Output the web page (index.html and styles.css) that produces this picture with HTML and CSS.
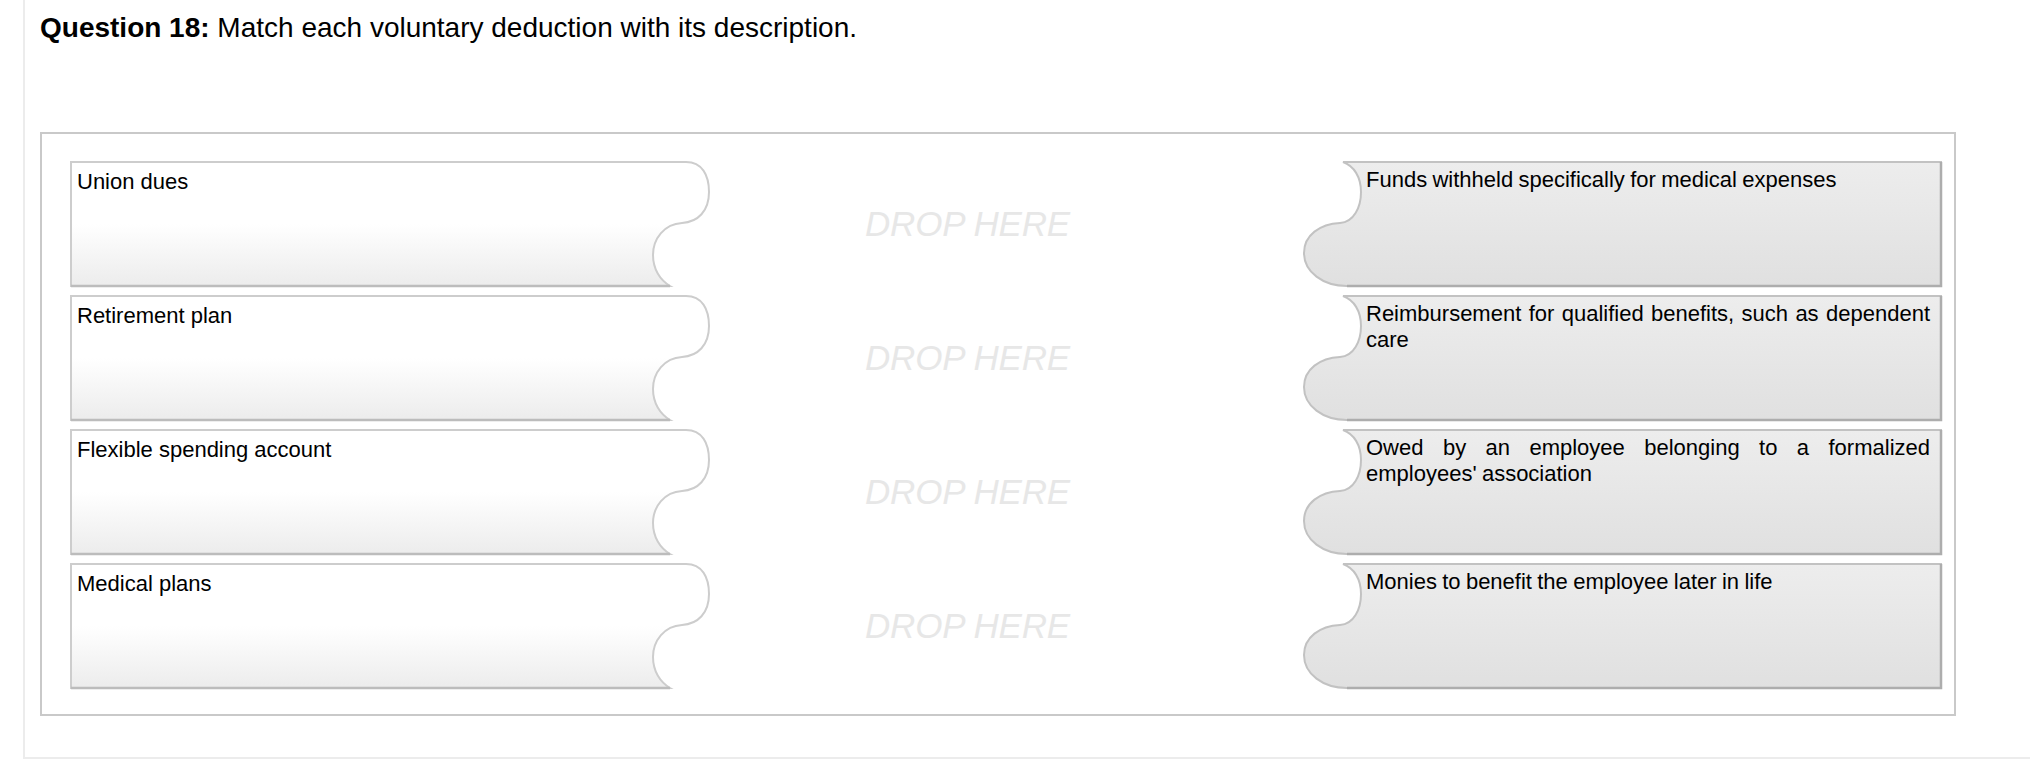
FILE: index.html
```html
<!DOCTYPE html>
<html lang="en">
<head>
<meta charset="utf-8">
<title>Question 18</title>
<link rel="stylesheet" href="styles.css">
</head>
<body>
<svg class="defs" width="0" height="0" aria-hidden="true">
  <defs>
    <linearGradient id="termFill" x1="0" y1="0" x2="0" y2="1">
      <stop offset="0" stop-color="#ffffff"/>
      <stop offset="0.5" stop-color="#ffffff"/>
      <stop offset="1" stop-color="#ececec"/>
    </linearGradient>
    <linearGradient id="descFill" x1="0" y1="0" x2="0" y2="1">
      <stop offset="0" stop-color="#ededed"/>
      <stop offset="1" stop-color="#e0e0e0"/>
    </linearGradient>
  </defs>
</svg>

<div class="page">
  <h1 class="question"><strong>Question 18:</strong> Match each voluntary deduction with its description.</h1>

  <div class="board">
    <div class="pair">
      <div class="term">
        <svg class="shape" viewBox="0 0 640 126" aria-hidden="true">
          <path class="term-body" d="M1 1H616C632 1 639 14 639 31C639 50 628 61 612 62C594 63 583 78 583 94C583 108 590 119 600 125H1Z"/>
          <path class="term-base" d="M1 125H600"/>
        </svg>
        <span class="label">Union dues</span>
      </div>
      <div class="drop">DROP HERE</div>
      <div class="desc">
        <svg class="shape" viewBox="0 0 639 126" aria-hidden="true">
          <path class="desc-body" d="M40 1H638V125H44C20 125 1 111 1 92C1 74 17 63 37 62C51 61 58 46 58 31C58 16 51 5 40 1Z"/>
          <path class="desc-edge" d="M638 1V125H44"/>
        </svg>
        <p class="label">Funds withheld specifically for medical expenses</p>
      </div>
    </div>

    <div class="pair">
      <div class="term">
        <svg class="shape" viewBox="0 0 640 126" aria-hidden="true">
          <path class="term-body" d="M1 1H616C632 1 639 14 639 31C639 50 628 61 612 62C594 63 583 78 583 94C583 108 590 119 600 125H1Z"/>
          <path class="term-base" d="M1 125H600"/>
        </svg>
        <span class="label">Retirement plan</span>
      </div>
      <div class="drop">DROP HERE</div>
      <div class="desc">
        <svg class="shape" viewBox="0 0 639 126" aria-hidden="true">
          <path class="desc-body" d="M40 1H638V125H44C20 125 1 111 1 92C1 74 17 63 37 62C51 61 58 46 58 31C58 16 51 5 40 1Z"/>
          <path class="desc-edge" d="M638 1V125H44"/>
        </svg>
        <p class="label">Reimbursement for qualified benefits, such as dependent care</p>
      </div>
    </div>

    <div class="pair">
      <div class="term">
        <svg class="shape" viewBox="0 0 640 126" aria-hidden="true">
          <path class="term-body" d="M1 1H616C632 1 639 14 639 31C639 50 628 61 612 62C594 63 583 78 583 94C583 108 590 119 600 125H1Z"/>
          <path class="term-base" d="M1 125H600"/>
        </svg>
        <span class="label">Flexible spending account</span>
      </div>
      <div class="drop">DROP HERE</div>
      <div class="desc">
        <svg class="shape" viewBox="0 0 639 126" aria-hidden="true">
          <path class="desc-body" d="M40 1H638V125H44C20 125 1 111 1 92C1 74 17 63 37 62C51 61 58 46 58 31C58 16 51 5 40 1Z"/>
          <path class="desc-edge" d="M638 1V125H44"/>
        </svg>
        <p class="label">Owed by an employee belonging to a formalized employees' association</p>
      </div>
    </div>

    <div class="pair">
      <div class="term">
        <svg class="shape" viewBox="0 0 640 126" aria-hidden="true">
          <path class="term-body" d="M1 1H616C632 1 639 14 639 31C639 50 628 61 612 62C594 63 583 78 583 94C583 108 590 119 600 125H1Z"/>
          <path class="term-base" d="M1 125H600"/>
        </svg>
        <span class="label">Medical plans</span>
      </div>
      <div class="drop">DROP HERE</div>
      <div class="desc">
        <svg class="shape" viewBox="0 0 639 126" aria-hidden="true">
          <path class="desc-body" d="M40 1H638V125H44C20 125 1 111 1 92C1 74 17 63 37 62C51 61 58 46 58 31C58 16 51 5 40 1Z"/>
          <path class="desc-edge" d="M638 1V125H44"/>
        </svg>
        <p class="label">Monies to benefit the employee later in life</p>
      </div>
    </div>
  </div>
</div>
</body>
</html>
```

FILE: styles.css
```css
html, body {
  margin: 0;
  background: #ffffff;
}

body {
  font-family: "Liberation Sans", Arial, Helvetica, sans-serif;
  color: #000000;
}

.defs {
  position: absolute;
  width: 0;
  height: 0;
}

/* question panel */
.page {
  margin-left: 23px;
  border-left: 2px solid #ececec;
  border-bottom: 2px solid #ececec;
  padding: 11px 0 41px 15px;
}

.question {
  margin: 0 0 87px;
  font-size: 28px;
  line-height: 34px;
  font-weight: normal;
}

.question strong {
  font-weight: bold;
}

/* matching board */
.board {
  box-sizing: border-box;
  width: 1916px;
  border: 2px solid #c9c9c9;
  padding: 27px 12px 25px 28px;
  display: flex;
  flex-direction: column;
  gap: 8px;
}

.pair {
  display: grid;
  grid-template-columns: 640px 1fr 639px;
  height: 126px;
}

.term,
.desc {
  position: relative;
}

.shape {
  position: absolute;
  inset: 0;
  width: 100%;
  height: 100%;
  overflow: visible;
}

.term-body {
  fill: url(#termFill);
  stroke: #cdcdcd;
  stroke-width: 2;
}

.term-base {
  fill: none;
  stroke: #bcbcbc;
  stroke-width: 2.5;
}

.desc-body {
  fill: url(#descFill);
  stroke: #c2c2c2;
  stroke-width: 2;
}

.desc-edge {
  fill: none;
  stroke: #adadad;
  stroke-width: 2.5;
}

.label {
  position: relative;
  display: block;
  margin: 0;
  font-size: 22px;
  line-height: 26px;
}

.term .label {
  padding: 8px 0 0 7px;
}

.desc .label {
  padding: 6px 12px 0 63px;
  text-align: justify;
  word-spacing: -0.8px;
}

/* empty drop target between the pieces */
.drop {
  display: flex;
  align-items: center;
  justify-content: center;
  padding-right: 78px;
  font-size: 35px;
  font-style: italic;
  color: #e7e7e7;
  letter-spacing: -0.2px;
}
```
